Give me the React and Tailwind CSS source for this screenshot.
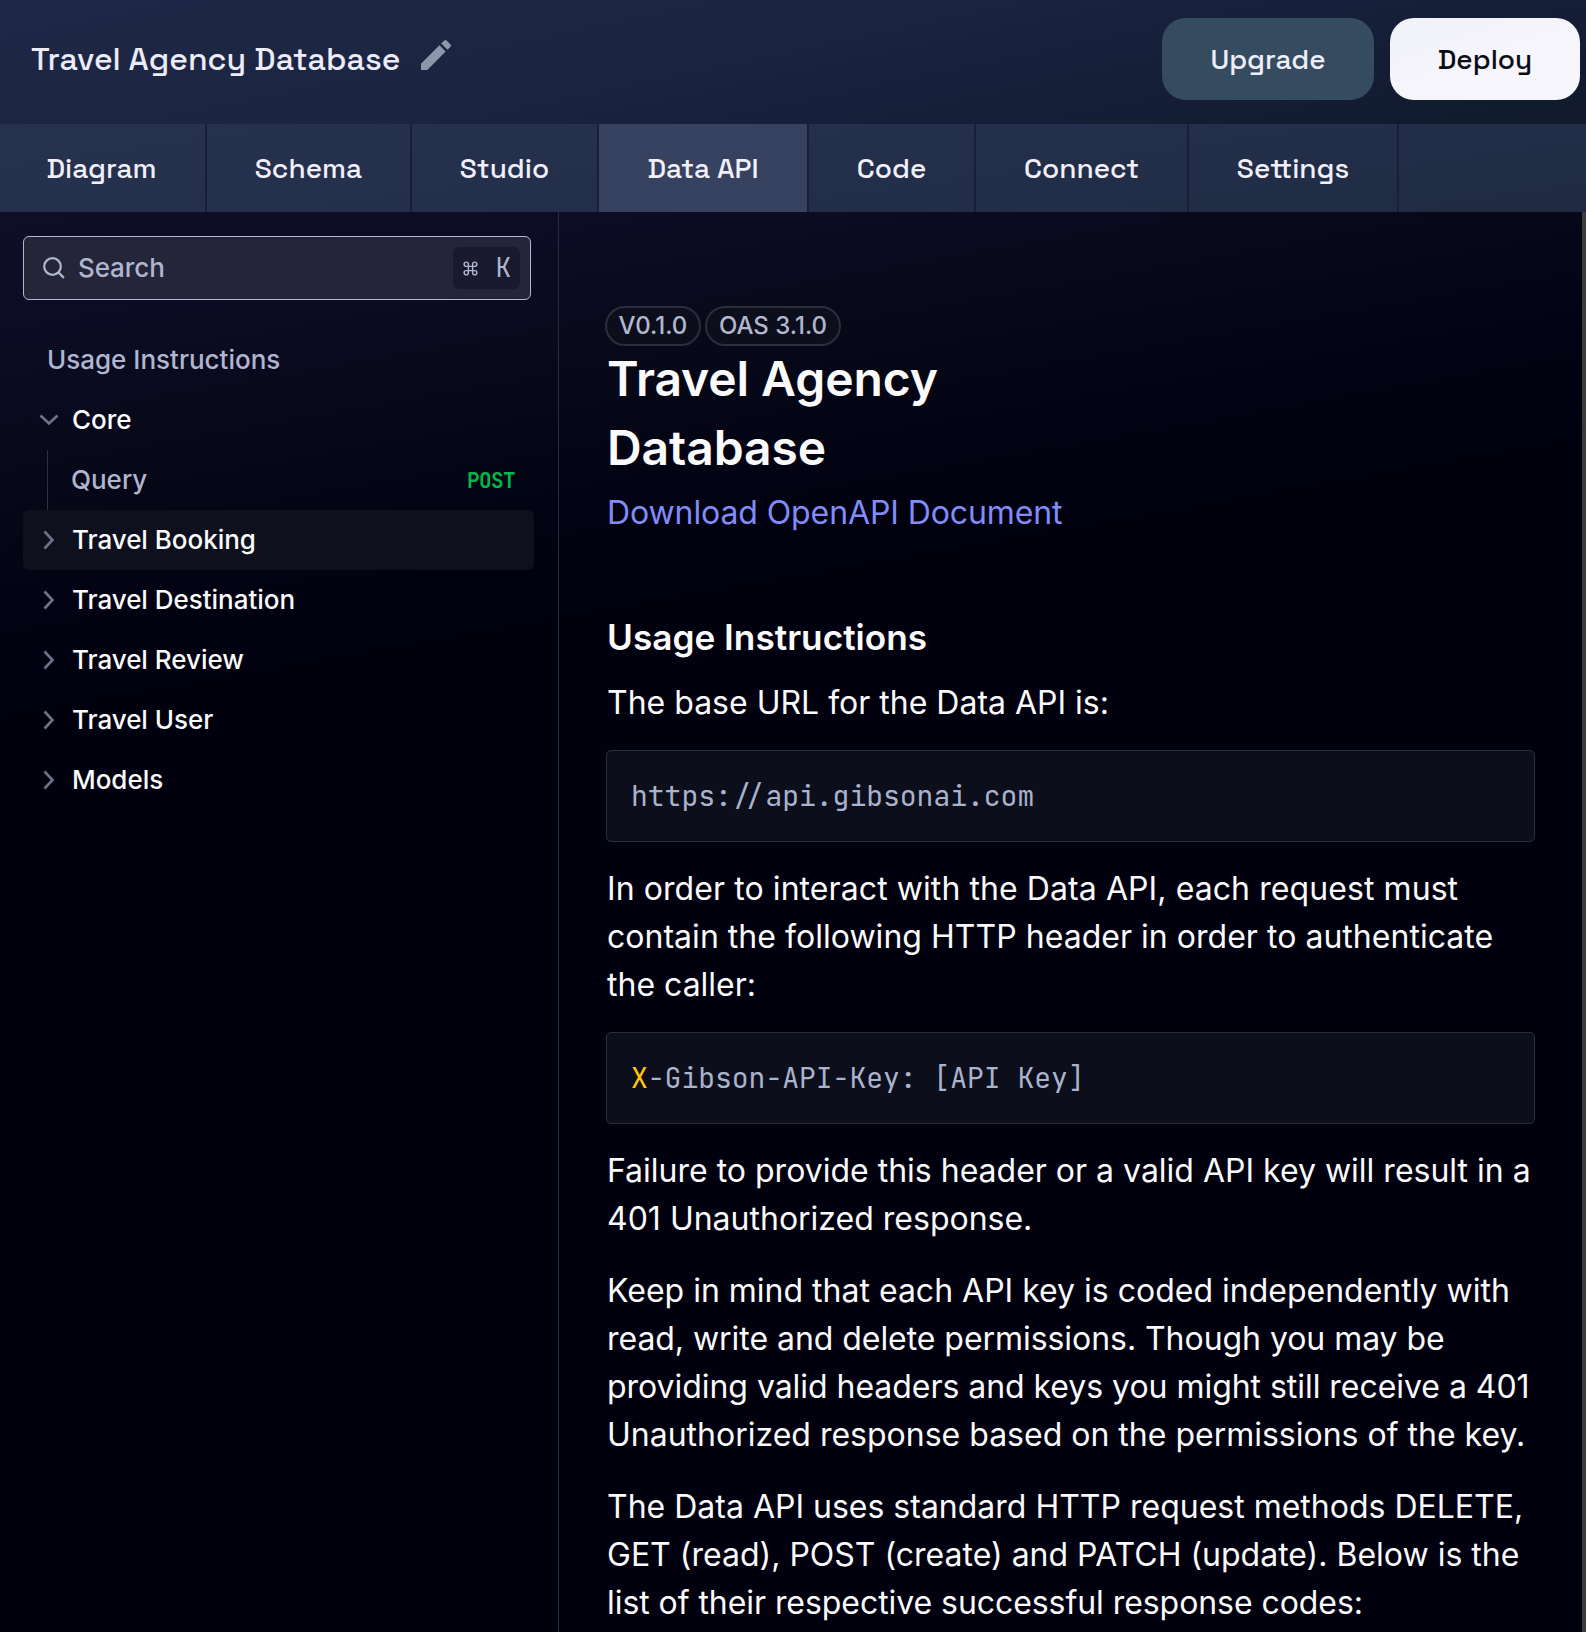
import React from "react";
import { MdEdit } from "react-icons/md";

const grotesk = "font-['Space_Grotesk','Inter',sans-serif]";
const mono = "font-['JetBrains_Mono','DejaVu_Sans_Mono',monospace]";

const tabs = [
  { label: "Diagram", width: "w-[207px] pr-[2px]" },
  { label: "Schema", width: "w-[205px]" },
  { label: "Studio", width: "w-[187px]" },
  { label: "Data API", width: "w-[210px]", active: true },
  { label: "Code", width: "w-[167px]" },
  { label: "Connect", width: "w-[213px]" },
  { label: "Settings", width: "w-[210px]" },
];

const groups = ["Travel Booking", "Travel Destination", "Travel Review", "Travel User", "Models"];

function Chevron({ open }) {
  return (
    <svg
      width="20"
      height="20"
      viewBox="0 0 20 20"
      fill="none"
      stroke="currentColor"
      strokeWidth="2.6"
      className={open ? "text-[#6e7389] rotate-90" : "text-[#6e7389]"}
    >
      <path d="M5.500 1.500 13.500 10l-8 8.500" />
    </svg>
  );
}

function Header() {
  return (
    <header className="flex h-[124px] items-start justify-between bg-[linear-gradient(168deg,#1e2745_0%,#1b2440_45%,#151e37_72%,#101a2b_100%)] pr-[6px] pl-[31px]">
      <div className="flex h-[118px] items-center">
        <h1 className={`${grotesk} w-[369px] text-[32px] leading-[40px] font-medium whitespace-nowrap text-[#ecebf8]`}>
          Travel Agency Database
        </h1>
        <MdEdit size={40} className="mb-[8px] ml-[16px] text-[#8b97aa]" />
      </div>
      <div className={`${grotesk} flex gap-4 pt-[18px] text-[28px] font-medium`}>
        <button className="h-[82px] w-[212px] rounded-[24px] bg-[#344b60] text-[#eeeefa]">Upgrade</button>
        <button className="h-[82px] w-[190px] rounded-[24px] bg-[linear-gradient(160deg,#eff2f7,#f6f5fc_50%)] text-[#0c0c14]">
          Deploy
        </button>
      </div>
    </header>
  );
}

function Tabs() {
  return (
    <nav className={`${grotesk} flex h-[88px] bg-[linear-gradient(172deg,#27324e_0%,#24304b_50%,#1f2a42_100%)] text-[28px] font-medium text-[#f0effa]`}>
      {tabs.map((t) => (
        <div
          key={t.label}
          className={`${t.width} flex shrink-0 items-center justify-center border-r-2 border-[#172038] whitespace-nowrap ${t.active ? "bg-[#36425f]" : ""}`}
        >
          {t.label}
        </div>
      ))}
    </nav>
  );
}

function Sidebar() {
  return (
    <aside className="w-[559px] shrink-0 border-r border-[#2b2c3b] pt-[24px] pl-[23px] text-[26px] font-medium">
      <div className="flex h-[64px] w-[508px] items-center rounded-[6px] border border-[#b0b8d0] bg-[#242538] pr-[10px] pl-[18px] text-[#b0b6d0]">
        <svg width="24" height="24" viewBox="0 0 24 24" fill="none" stroke="currentColor" strokeWidth="2.2">
          <circle cx="10.500" cy="10.500" r="8.300" />
          <path d="m16.400 16.400 5.500 5.500" />
        </svg>
        <span className="ml-[12px] grow pb-[2px] tracking-[-0.1px]">Search</span>
        <span className="flex h-[42px] w-[67px] items-center justify-between rounded-[6px] bg-[#191a2d] pr-[9px] pl-[9px]">
          <svg width="17" height="17" viewBox="0 0 24 24" fill="none" stroke="currentColor" strokeWidth="2">
            <path d="M15 6v12a3 3 0 1 0 3-3H6a3 3 0 1 0 3 3V6a3 3 0 1 0-3 3h12a3 3 0 1 0-3-3" />
          </svg>
          <span className={`${mono} pb-px text-[26px] font-normal`}>K</span>
        </span>
      </div>
      <div className="mt-[30px] w-[511px]">
        <div className="flex h-[60px] items-center pb-[2px] pl-[24px] text-[#b0b6d0]">Usage Instructions</div>
        <div className="flex h-[60px] items-center pl-[16px] text-white">
          <Chevron open />
          <span className="ml-[13px] pb-[2px]">Core</span>
        </div>
        <div className="ml-[24px] flex h-[60px] items-center justify-between border-l border-[#2f303f] pr-[18px] pl-[23px] text-[#b0b6d0]">
          <span className="pb-[2px]">Query</span>
          <span className={`${mono} pt-px pr-px text-[21px] font-bold tracking-[-0.6px] text-[#00b84a]`}>POST</span>
        </div>
        {groups.map((g, i) => (
          <div
            key={g}
            className={`flex h-[60px] items-center rounded-[6px] pl-[16px] text-[#fafafa] ${i === 0 ? "bg-[#0f101e]" : ""}`}
          >
            <Chevron />
            <span className="ml-[13px] pb-[2px] tracking-[-0.03px]">{g}</span>
          </div>
        ))}
      </div>
    </aside>
  );
}

function CodeBox({ children }) {
  return (
    <pre className={`${mono} flex h-[92px] items-center rounded-[5px] border border-[#2c2d3b] bg-[#0d0e1c] pl-[24px] text-[28px] text-[#a9b3cc]`}>
      {children}
    </pre>
  );
}

function Content() {
  return (
    <main className="flex w-[976px] shrink-0 flex-col pt-[94px] pl-[47px] text-[32px] leading-[48px] text-[#fafafa]">
      <div className="-ml-px flex gap-1 text-[24px] leading-[36px] font-medium text-[#b0b8d0]">
        <span className="flex h-[40px] w-[96px] items-center justify-center rounded-full border-2 border-[#2c2d3d] bg-[#0d0e1c]">V0.1.0</span>
        <span className="flex h-[40px] w-[136px] items-center justify-center rounded-full border-2 border-[#2c2d3d] bg-[#0d0e1c]">OAS 3.1.0</span>
      </div>
      <h2 className="-mt-[2px] w-[400px] pl-px text-[48px] leading-[69px] font-semibold tracking-[-0.08px]">Travel Agency Database</h2>
      <a className="mt-[7px] pl-px tracking-[-0.1px] text-[#818cf8]">Download OpenAPI Document</a>
      <h3 className="mt-[75px] pl-px text-[35.200px] leading-[50px] font-semibold">Usage Instructions</h3>
      <p className="mt-[17px] mb-[23px] pl-px">The base URL for the Data API is:</p>
      <CodeBox>https://api.gibsonai.com</CodeBox>
      <p className="my-[23px] pl-px">
        <span className="tracking-[0.080px]">In order to interact with the Data API, each request must</span><br />
        <span className="tracking-[0.030px]">contain the following HTTP header in order to authenticate</span><br />
        the caller:
      </p>
      <CodeBox>
        <span className="text-[#ffc900]">X</span>-Gibson-API-Key: [API Key]
      </CodeBox>
      <div className="mt-[23px] flex flex-col gap-[24px] pl-px whitespace-nowrap">
        <p>
          Failure to provide this header or a valid API key will result in a<br />
          401 Unauthorized response.
        </p>
        <p>
          Keep in mind that each API key is coded independently with<br />
          <span className="tracking-[-0.050px]">read, write and delete permissions. Though you may be</span><br />
          <span className="tracking-[-0.040px]">providing valid headers and keys you might still receive a 401</span><br />
          Unauthorized response based on the permissions of the key.
        </p>
        <p>
          The Data API uses standard HTTP request methods DELETE,<br />
          GET (read), POST (create) and PATCH (update). Below is the<br />
          <span className="tracking-[-0.060px]">list of their respective successful response codes:</span>
        </p>
      </div>
    </main>
  );
}

export default function App() {
  return (
    <div className="flex h-[1632px] w-[1586px] flex-col overflow-hidden bg-[#00000f] font-['Inter',sans-serif]">
      <Header />
      <Tabs />
      <div className="flex min-h-0 grow justify-between bg-[linear-gradient(170deg,#0e0f27_0px,#0c0d24_120px,#070818_260px,#020212_400px,#00000f_500px)]">
        <Sidebar />
        <Content />
        <div className="ml-auto w-[4px] bg-[#3c3c3c]" />
      </div>
    </div>
  );
}
